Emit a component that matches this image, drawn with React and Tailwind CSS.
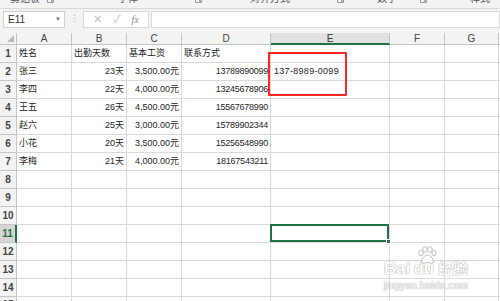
import React from "react";

const cols = ["A", "B", "C", "D", "E", "F", "G", ""];

const data = [
  ["姓名", "出勤天数", "基本工资", "联系方式"],
  ["张三", "23天", "3,500.00元", "13789890099"],
  ["李四", "22天", "4,000.00元", "13245678906"],
  ["王五", "26天", "4,500.00元", "15567678990"],
  ["赵六", "25天", "3,000.00元", "15789902344"],
  ["小花", "20天", "3,500.00元", "15256548990"],
  ["李梅", "21天", "4,000.00元", "18167543211"],
];

function Launcher() {
  return (
    <svg width="7" height="7" viewBox="0 0 7 7" className="shrink-0">
      <path d="M0.5 0.5h6v6h-6z" fill="none" stroke="#9a9a9a" />
      <path d="M3 3l3 3M4 6h2V4" fill="none" stroke="#9a9a9a" />
    </svg>
  );
}

function RibbonStrip() {
  // only the lower edge of the ribbon group labels is in view
  return (
    <div className="h-[9px] overflow-hidden border-b border-[#d9d9d9] bg-[#f3f3f3]">
      <div className="relative -mt-[8px] h-[14px] text-[10px] leading-[14px] text-[#555]">
        <span className="absolute left-[10px]">剪贴板</span>
        <span className="absolute left-[47px] top-[4px]"><Launcher /></span>
        <span className="absolute left-[118px]">字体</span>
        <span className="absolute left-[195px] top-[4px]"><Launcher /></span>
        <span className="absolute left-[250px]">对齐方式</span>
        <span className="absolute left-[337px] top-[4px]"><Launcher /></span>
        <span className="absolute left-[377px]">数字</span>
        <span className="absolute left-[420px] top-[4px]"><Launcher /></span>
        <span className="absolute left-[470px]">样式</span>
      </div>
    </div>
  );
}

function FormulaBar() {
  return (
    <div className="flex h-[24px] items-start bg-[#f3f3f3] pt-[2px]">
      <div className="ml-[3px] flex h-[17px] w-[62px] items-center justify-between border border-[#d0d0d0] bg-white pl-[4px] pr-[3px] text-[10px] text-[#333]">
        <span>E11</span>
        <span className="text-[6px] text-[#777]">▼</span>
      </div>
      <div className="flex h-[17px] w-[18px] items-center justify-center text-[9px] text-[#b0b0b0]">⋮</div>
      <div className="flex h-[17px] w-[66px] items-center justify-around border border-[#d9d9d9] bg-white px-[4px] text-[#c2c2c2]">
        <span className="text-[11px]">✕</span>
        <span className="text-[11px]">✓</span>
        <span className="font-['Liberation_Serif',serif] text-[10px] italic text-[#8a8a8a]">fx</span>
      </div>
      <div className="ml-[2px] h-[17px] flex-1 border border-[#d9d9d9] bg-white" />
    </div>
  );
}

function Watermark() {
  const outline = "[text-shadow:0_0_1px_#8d8d8d,0_0_1px_#8d8d8d]";
  return (
    <div className="pointer-events-none absolute left-[384px] top-[213px] w-[90px] opacity-80">
      <svg width="22" height="18" viewBox="0 0 22 18" className="absolute left-[32px] top-0">
        <g fill="white" stroke="#9a9a9a" strokeWidth="0.8">
          <ellipse cx="5" cy="7" rx="2.2" ry="2.8" />
          <ellipse cx="9" cy="3.5" rx="2.2" ry="2.8" />
          <ellipse cx="14" cy="3.5" rx="2.2" ry="2.8" />
          <ellipse cx="18" cy="7" rx="2.2" ry="2.8" />
          <path d="M11.5 9c3 0 6 4 6 6.5 0 2-2 2-3 1.7-1-.3-2-.7-3-.7s-2 .4-3 .7c-1 .3-3 .3-3-1.7 0-2.5 3-6.5 6-6.5z" />
        </g>
      </svg>
      <div className={`mt-[12px] flex items-baseline font-['Liberation_Sans',sans-serif] font-bold text-white ${outline}`}>
        <span className="text-[17px] leading-[20px]">Bai</span>
        <span className="ml-[3px] text-[17px] leading-[20px]">du</span>
        <span className="ml-[4px] font-['Noto_Sans_CJK_SC',sans-serif] text-[15px] leading-[20px]">经验</span>
      </div>
      <div className={`mt-[1px] font-['Liberation_Sans',sans-serif] text-[10px] leading-[12px] tracking-[0.2px] text-white ${outline}`}>
        jingyan.baidu.com
      </div>
    </div>
  );
}

function Cell({ right, children }) {
  const align = right ? "justify-end pr-[2px]" : "justify-start pl-[2px]";
  return (
    <div className={`flex items-center overflow-visible whitespace-nowrap border-b border-r border-[#dadada] bg-white pt-[1px] ${align}`}>
      {children}
    </div>
  );
}

export default function App() {
  const bodyRows = Array.from({ length: 15 }, (_, i) => i);

  return (
    <div className="h-[301px] w-[500px] overflow-hidden bg-white font-['Liberation_Sans','Noto_Sans_CJK_SC',sans-serif] text-[9px] text-[#262626]">
      <RibbonStrip />
      <FormulaBar />

      <div className="relative grid grid-cols-[17px_55px_55px_55px_89px_119px_55px_54px_1fr] grid-rows-[12px_repeat(14,18px)_1fr]">
        {/* corner */}
        <div className="relative border-b border-r border-[#c6c6c6] bg-[#f3f3f3]">
          <div className="absolute bottom-[2px] right-[2px] h-0 w-0 border-b-[7px] border-l-[7px] border-b-[#b9b9b9] border-l-transparent" />
        </div>
        {/* column headers */}
        {cols.map((col) =>
          col === "E" ? (
            <div key="E" className="flex items-center justify-center border-b-2 border-r border-b-[#217346] border-r-[#c6c6c6] bg-[#e1e1e1] pt-[1px] text-[10px] text-[#333]">
              E
            </div>
          ) : (
            <div key={col || "H"} className="flex items-center justify-center border-b border-r border-[#c6c6c6] bg-[#f3f3f3] text-[10px] text-[#444]">
              {col}
            </div>
          )
        )}

        {bodyRows.map((i) => {
          const rowNo = i + 1;
          const values = data[i] || [];
          const selected = rowNo === 11;
          return (
            <React.Fragment key={rowNo}>
              <div
                className={`flex items-end justify-center pb-[1px] text-[10px] font-bold border-b border-[#c6c6c6] ${
                  selected
                    ? "border-r-2 border-r-[#217346] bg-[#d6d6d6] text-[#217346]"
                    : "border-r border-r-[#c6c6c6] bg-[#f3f3f3] text-[#444]"
                }`}
              >
                {rowNo}
              </div>
              {cols.map((col, c) => (
                <div key={col || "X"} className="contents">
                  {col === "E" && selected ? (
                    <div className="relative border-b border-r border-[#dadada] bg-white">
                      <div className="absolute -left-[1px] -top-[1px] bottom-0 right-0 border-2 border-[#217346]" />
                      <div className="absolute -bottom-[2px] -right-[2px] h-[5px] w-[5px] border border-white bg-[#217346]" />
                    </div>
                  ) : (
                    <Cell right={i > 0 && c >= 1 && c <= 3}>
                      {col === "E" && rowNo === 2 ? (
                        <span className="pl-[1px] tracking-[0.3px]">137-8989-0099</span>
                      ) : c === 3 && i > 0 ? (
                        <span className="tracking-[-0.25px]">{values[c]}</span>
                      ) : (
                        values[c]
                      )}
                    </Cell>
                  )}
                </div>
              ))}
            </React.Fragment>
          );
        })}

        {/* red annotation box */}
        <div className="pointer-events-none absolute left-[268px] top-[19px] h-[44px] w-[79px] rounded-[1px] border-2 border-[#ff2424]" />

        <Watermark />
      </div>
    </div>
  );
}
